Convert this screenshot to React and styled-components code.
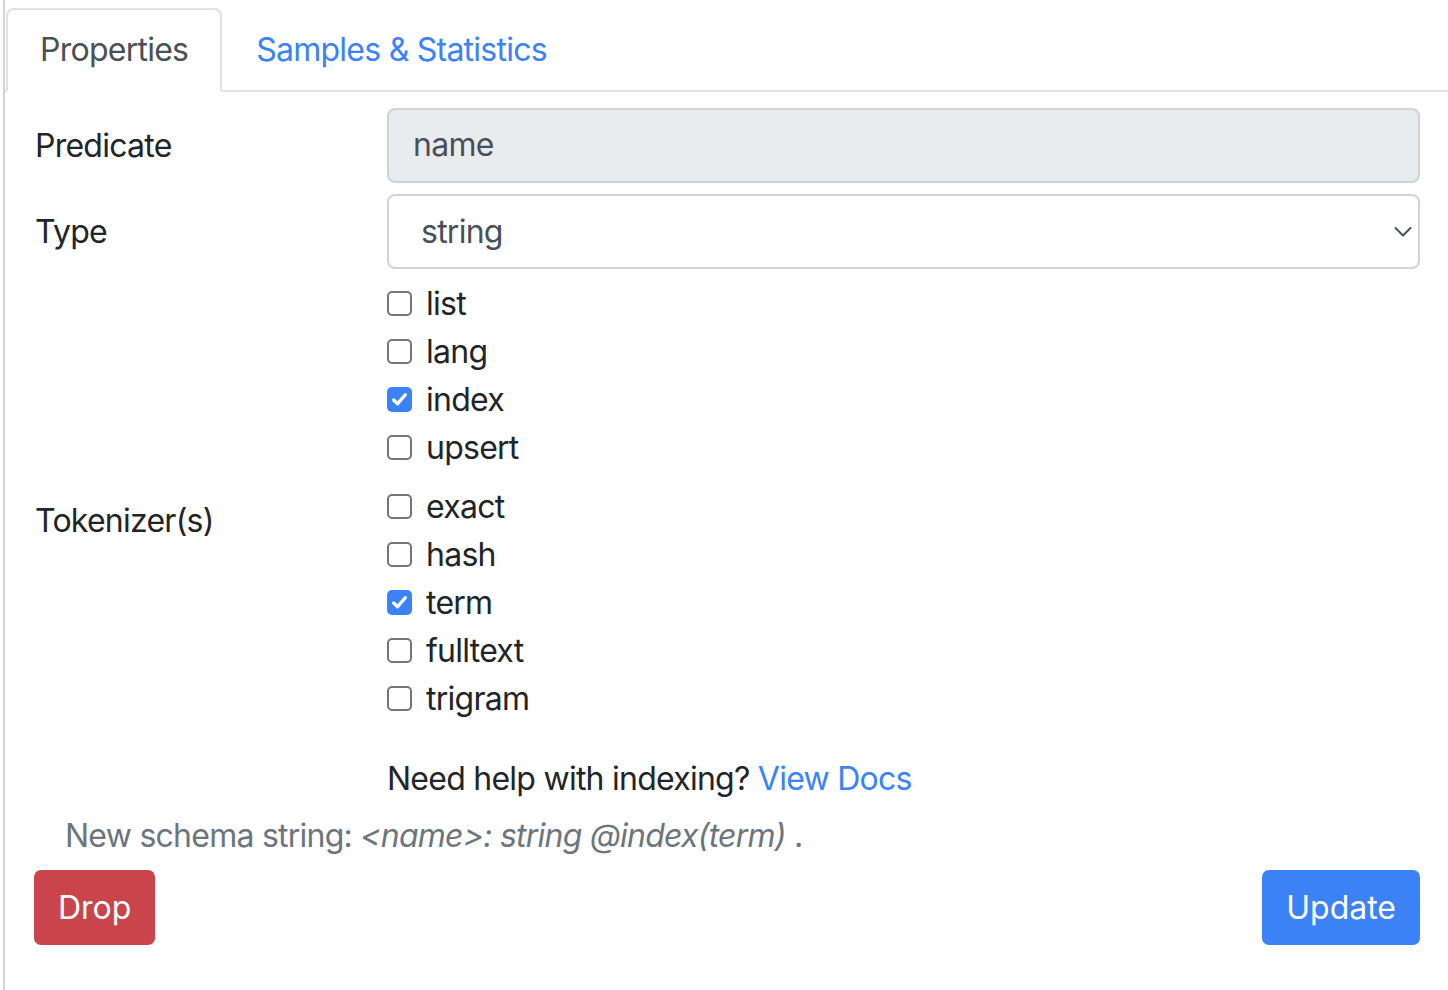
import React from 'react'
import styled, { createGlobalStyle } from 'styled-components'

const GlobalStyle = createGlobalStyle`
  html, body {
    margin: 0;
    padding: 0;
    background: #fff;
  }
  body {
    font-family: Inter, "Noto Sans", "Liberation Sans", sans-serif;
    font-size: 32px;
    line-height: 48px;
    letter-spacing: -0.75px;
    color: #212529;
  }
`

const Page = styled.div`
  margin-left: 3px;
  min-height: 990px;
  border-left: 2px solid #d4d4d4;
  box-sizing: border-box;
`

const TabBar = styled.div`
  display: flex;
  padding: 8px 0 0 1px;
  border-bottom: 2px solid #dee2e6;
`

const Tab = styled.div`
  padding: 16px 32px;
  margin-bottom: -2px;
  border: 2px solid ${p => (p.active ? '#dee2e6' : 'transparent')};
  border-bottom-color: ${p => (p.active ? '#fff' : 'transparent')};
  border-radius: 8px 8px 0 0;
  background: ${p => (p.active ? '#fff' : 'transparent')};
  color: ${p => (p.active ? '#495057' : '#3b82f6')};
`

const Form = styled.div`
  padding: 16px 28px 0 29px;
`

const FormRow = styled.div`
  display: grid;
  grid-template-columns: 323px 1fr;
  column-gap: 30px;
  margin-bottom: ${p => p.gap || 0}px;
`

const Label = styled.div`
  padding-top: 14px;
  padding-left: 1px;
`

const Input = styled.div`
  height: 75px;
  box-sizing: border-box;
  border: 2px solid #ced4da;
  border-radius: 8px;
  background: #e9ecef;
  color: #495057;
  padding: 11px 24px;
`

const Select = styled.div`
  height: 75px;
  box-sizing: border-box;
  border: 2px solid #ced4da;
  border-radius: 8px;
  background: #fff;
  color: #495057;
  padding: 0 6px 0 32px;
  display: flex;
  align-items: center;
  justify-content: space-between;
`

const Checks = styled.div`
  display: flex;
  flex-direction: column;
`

const CheckRow = styled.label`
  display: flex;
  align-items: center;
  gap: 14px;
  height: 48px;
`

const Box = styled.span`
  width: 25px;
  height: 25px;
  box-sizing: border-box;
  border-radius: 5px;
  border: ${p => (p.checked ? 'none' : '2px solid #767676')};
  background: ${p => (p.checked ? '#3b82f6' : '#fff')};
  display: flex;
  align-items: center;
  justify-content: center;
  margin-top: -2px;
`

const HelpText = styled.div``

const Link = styled.span`
  color: #3b82f6;
`

const Schema = styled.div`
  margin: 9px 0 10px 31px;
  color: #6c757d;

  em {
    font-style: italic;
  }
`

const Buttons = styled.div`
  display: flex;
  justify-content: space-between;
`

const Button = styled.button`
  font: inherit;
  height: 75px;
  padding: 0 24px;
  border: none;
  border-radius: 7px;
  color: #fff;
  background: ${p => (p.variant === 'danger' ? '#ca444b' : '#3b82f6')};
`

const Check = ({ label, checked }) => (
  <CheckRow>
    <Box checked={checked}>
      {checked && (
        <svg width="19" height="19" viewBox="0 0 18 18">
          <path d="M3.5 9.5 L7.2 13 L14.5 4.5" fill="none" stroke="#fff" strokeWidth="3.2" strokeLinecap="round" strokeLinejoin="round" />
        </svg>
      )}
    </Box>
    {label}
  </CheckRow>
)

const options = [
  { label: 'list' },
  { label: 'lang' },
  { label: 'index', checked: true },
  { label: 'upsert' }
]

const tokenizers = [
  { label: 'exact' },
  { label: 'hash' },
  { label: 'term', checked: true },
  { label: 'fulltext' },
  { label: 'trigram' }
]

export default function App() {
  return (
    <Page>
      <GlobalStyle />
      <TabBar>
        <Tab active>Properties</Tab>
        <Tab>Samples &amp; Statistics</Tab>
      </TabBar>
      <Form>
        <FormRow gap={11}>
          <Label>Predicate</Label>
          <Input>name</Input>
        </FormRow>
        <FormRow gap={11}>
          <Label>Type</Label>
          <Select>
            string
            <svg width="18" height="12" viewBox="0 0 18 12">
              <path d="M1.5 2 L9 9.5 L16.5 2" fill="none" stroke="#495057" strokeWidth="2" strokeLinecap="round" strokeLinejoin="round" />
            </svg>
          </Select>
        </FormRow>
        <FormRow gap={11}>
          <div />
          <Checks>
            {options.map(o => <Check key={o.label} {...o} />)}
          </Checks>
        </FormRow>
        <FormRow gap={32}>
          <Label>Tokenizer(s)</Label>
          <Checks>
            {tokenizers.map(o => <Check key={o.label} {...o} />)}
          </Checks>
        </FormRow>
        <FormRow>
          <div />
          <HelpText>
            Need help with indexing? <Link>View Docs</Link>
          </HelpText>
        </FormRow>
        <Schema>
          New schema string: <em>&lt;name&gt;: string @index(term)</em> .
        </Schema>
        <Buttons>
          <Button variant="danger">Drop</Button>
          <Button>Update</Button>
        </Buttons>
      </Form>
    </Page>
  )
}
